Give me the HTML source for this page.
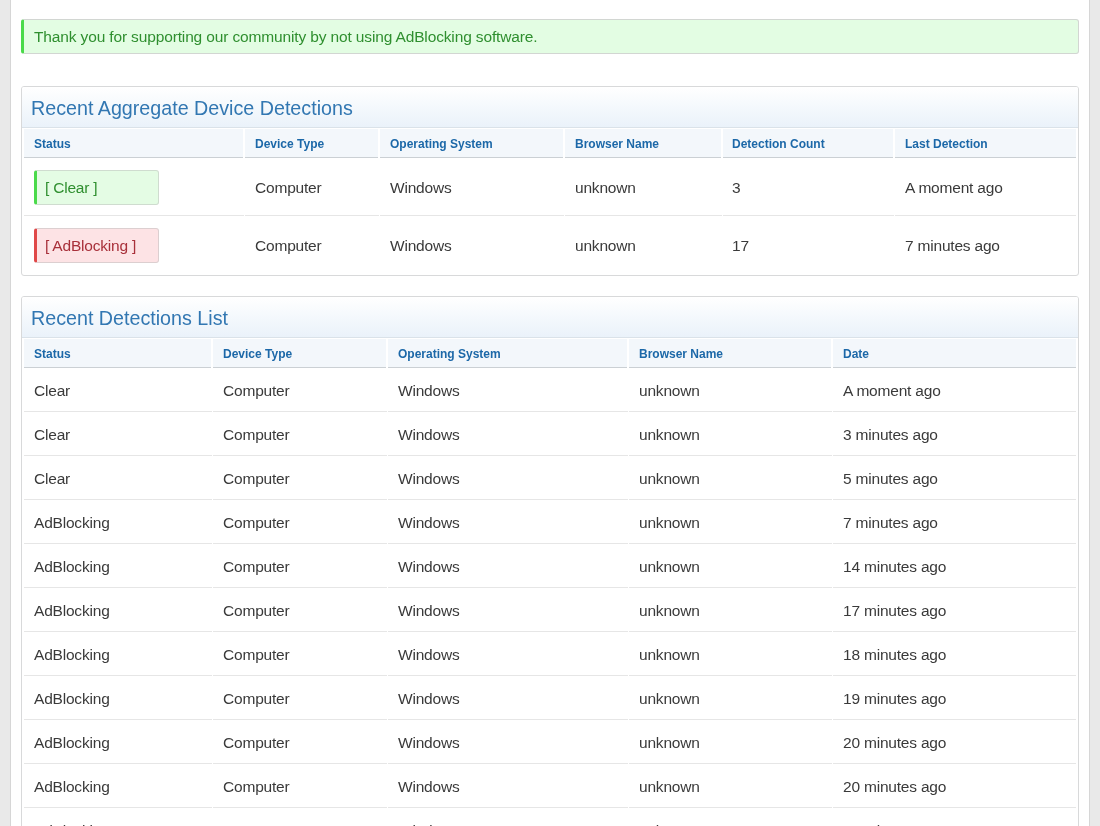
<!DOCTYPE html>
<html><head><meta charset="utf-8"><title>Detections</title>
<style>
html,body{margin:0;padding:0}
body{width:1100px;height:826px;overflow:hidden;background:#e9e9e9;position:relative;font-family:"Liberation Sans", sans-serif}
.wrap{position:absolute;left:10px;top:-10px;width:1078px;height:900px;background:#fff;border:1px solid #d6d6d6}
.t{position:absolute;white-space:nowrap;will-change:transform}
.alert{position:absolute;left:21px;top:19px;width:1058px;height:35px;box-sizing:border-box;background:#e3fde3;border:1px solid #d2d6d2;border-left:3px solid #4ada4a;border-radius:3px}
.panel{position:absolute;left:21px;width:1058px;box-sizing:border-box;border:1px solid #d8d9da;border-radius:3px;background:#fff;overflow:hidden}
.ph{position:absolute;left:0;top:0;right:0;height:40px;background:linear-gradient(#ffffff,#eaf2fa);border-bottom:1px solid #dae2e9}
.th{position:absolute;height:29px;box-sizing:border-box;background:#f3f7fb;border-top:1px solid #fff;border-bottom:1px solid #cbd0d4}
.sep{position:absolute;height:1px;background:#e6e6e6}
.ttl{color:#3277b2}
.hd{color:#1c68a8;font-weight:bold}
.td{color:#3a3a3a}
.badge{position:absolute;box-sizing:border-box;width:125px;height:35px;border-radius:3px}
.bc{background:#e4fce4;border:1px solid #cfdccf;border-left:3px solid #4ada4a}
.ba{background:#fde3e5;border:1px solid #dccfd0;border-left:3px solid #e04848}
.gt{color:#2f8f2f}
.rt{color:#a8303a}
</style></head><body>
<div class="wrap"></div>
<div class="alert"></div>
<div class="t gt" style="left:34px;top:28.68px;font-size:15.5px;line-height:15.5px;letter-spacing:-0.14px">Thank you for supporting our community by not using AdBlocking software.</div>
<div class="panel" style="top:86px;height:190px"><div class="ph"></div></div>
<div class="t ttl" style="left:31px;top:98.92px;font-size:19.7px;line-height:19.7px">Recent Aggregate Device Detections</div>
<div class="th" style="left:24px;top:128px;height:30px;width:219px"></div>
<div class="t hd" style="left:34px;top:137.54px;font-size:12px;line-height:12px">Status</div>
<div class="th" style="left:245px;top:128px;height:30px;width:133px"></div>
<div class="t hd" style="left:255px;top:137.54px;font-size:12px;line-height:12px">Device Type</div>
<div class="th" style="left:380px;top:128px;height:30px;width:183px"></div>
<div class="t hd" style="left:390px;top:137.54px;font-size:12px;line-height:12px">Operating System</div>
<div class="th" style="left:565px;top:128px;height:30px;width:156px"></div>
<div class="t hd" style="left:575px;top:137.54px;font-size:12px;line-height:12px">Browser Name</div>
<div class="th" style="left:723px;top:128px;height:30px;width:170px"></div>
<div class="t hd" style="left:732px;top:137.54px;font-size:12px;line-height:12px">Detection Count</div>
<div class="th" style="left:895px;top:128px;height:30px;width:181px"></div>
<div class="t hd" style="left:905px;top:137.54px;font-size:12px;line-height:12px">Last Detection</div>
<div class="sep" style="left:24px;top:215px;width:220px"></div>
<div class="sep" style="left:245px;top:215px;width:134px"></div>
<div class="sep" style="left:380px;top:215px;width:184px"></div>
<div class="sep" style="left:565px;top:215px;width:157px"></div>
<div class="sep" style="left:723px;top:215px;width:171px"></div>
<div class="sep" style="left:895px;top:215px;width:181px"></div>
<div class="badge bc" style="left:34px;top:170px"></div>
<div class="t gt" style="left:45px;top:179.88px;font-size:15.5px;line-height:15.5px;letter-spacing:-0.2px">[ Clear ]</div>
<div class="t td" style="left:255px;top:179.88px;font-size:15.5px;line-height:15.5px;letter-spacing:-0.2px">Computer</div>
<div class="t td" style="left:390px;top:179.88px;font-size:15.5px;line-height:15.5px;letter-spacing:-0.2px">Windows</div>
<div class="t td" style="left:575px;top:179.88px;font-size:15.5px;line-height:15.5px;letter-spacing:-0.2px">unknown</div>
<div class="t td" style="left:732px;top:179.88px;font-size:15.5px;line-height:15.5px;letter-spacing:-0.2px">3</div>
<div class="t td" style="left:905px;top:179.88px;font-size:15.5px;line-height:15.5px;letter-spacing:-0.2px">A moment ago</div>
<div class="badge ba" style="left:34px;top:228px"></div>
<div class="t rt" style="left:45px;top:237.88px;font-size:15.5px;line-height:15.5px;letter-spacing:-0.2px">[ AdBlocking ]</div>
<div class="t td" style="left:255px;top:237.88px;font-size:15.5px;line-height:15.5px;letter-spacing:-0.2px">Computer</div>
<div class="t td" style="left:390px;top:237.88px;font-size:15.5px;line-height:15.5px;letter-spacing:-0.2px">Windows</div>
<div class="t td" style="left:575px;top:237.88px;font-size:15.5px;line-height:15.5px;letter-spacing:-0.2px">unknown</div>
<div class="t td" style="left:732px;top:237.88px;font-size:15.5px;line-height:15.5px;letter-spacing:-0.2px">17</div>
<div class="t td" style="left:905px;top:237.88px;font-size:15.5px;line-height:15.5px;letter-spacing:-0.2px">7 minutes ago</div>
<div class="panel" style="top:296px;height:600px"><div class="ph"></div></div>
<div class="t ttl" style="left:31px;top:308.92px;font-size:19.7px;line-height:19.7px">Recent Detections List</div>
<div class="th" style="left:24px;top:338px;height:30px;width:187px"></div>
<div class="t hd" style="left:34px;top:347.54px;font-size:12px;line-height:12px">Status</div>
<div class="th" style="left:213px;top:338px;height:30px;width:173px"></div>
<div class="t hd" style="left:223px;top:347.54px;font-size:12px;line-height:12px">Device Type</div>
<div class="th" style="left:388px;top:338px;height:30px;width:239px"></div>
<div class="t hd" style="left:398px;top:347.54px;font-size:12px;line-height:12px">Operating System</div>
<div class="th" style="left:629px;top:338px;height:30px;width:202px"></div>
<div class="t hd" style="left:639px;top:347.54px;font-size:12px;line-height:12px">Browser Name</div>
<div class="th" style="left:833px;top:338px;height:30px;width:243px"></div>
<div class="t hd" style="left:843px;top:347.54px;font-size:12px;line-height:12px">Date</div>
<div class="sep" style="left:24px;top:411px;width:188px"></div>
<div class="sep" style="left:213px;top:411px;width:174px"></div>
<div class="sep" style="left:388px;top:411px;width:240px"></div>
<div class="sep" style="left:629px;top:411px;width:203px"></div>
<div class="sep" style="left:833px;top:411px;width:243px"></div>
<div class="t td" style="left:34px;top:382.88px;font-size:15.5px;line-height:15.5px;letter-spacing:-0.2px">Clear</div>
<div class="t td" style="left:223px;top:382.88px;font-size:15.5px;line-height:15.5px;letter-spacing:-0.2px">Computer</div>
<div class="t td" style="left:398px;top:382.88px;font-size:15.5px;line-height:15.5px;letter-spacing:-0.2px">Windows</div>
<div class="t td" style="left:639px;top:382.88px;font-size:15.5px;line-height:15.5px;letter-spacing:-0.2px">unknown</div>
<div class="t td" style="left:843px;top:382.88px;font-size:15.5px;line-height:15.5px;letter-spacing:-0.2px">A moment ago</div>
<div class="sep" style="left:24px;top:455px;width:188px"></div>
<div class="sep" style="left:213px;top:455px;width:174px"></div>
<div class="sep" style="left:388px;top:455px;width:240px"></div>
<div class="sep" style="left:629px;top:455px;width:203px"></div>
<div class="sep" style="left:833px;top:455px;width:243px"></div>
<div class="t td" style="left:34px;top:426.88px;font-size:15.5px;line-height:15.5px;letter-spacing:-0.2px">Clear</div>
<div class="t td" style="left:223px;top:426.88px;font-size:15.5px;line-height:15.5px;letter-spacing:-0.2px">Computer</div>
<div class="t td" style="left:398px;top:426.88px;font-size:15.5px;line-height:15.5px;letter-spacing:-0.2px">Windows</div>
<div class="t td" style="left:639px;top:426.88px;font-size:15.5px;line-height:15.5px;letter-spacing:-0.2px">unknown</div>
<div class="t td" style="left:843px;top:426.88px;font-size:15.5px;line-height:15.5px;letter-spacing:-0.2px">3 minutes ago</div>
<div class="sep" style="left:24px;top:499px;width:188px"></div>
<div class="sep" style="left:213px;top:499px;width:174px"></div>
<div class="sep" style="left:388px;top:499px;width:240px"></div>
<div class="sep" style="left:629px;top:499px;width:203px"></div>
<div class="sep" style="left:833px;top:499px;width:243px"></div>
<div class="t td" style="left:34px;top:470.88px;font-size:15.5px;line-height:15.5px;letter-spacing:-0.2px">Clear</div>
<div class="t td" style="left:223px;top:470.88px;font-size:15.5px;line-height:15.5px;letter-spacing:-0.2px">Computer</div>
<div class="t td" style="left:398px;top:470.88px;font-size:15.5px;line-height:15.5px;letter-spacing:-0.2px">Windows</div>
<div class="t td" style="left:639px;top:470.88px;font-size:15.5px;line-height:15.5px;letter-spacing:-0.2px">unknown</div>
<div class="t td" style="left:843px;top:470.88px;font-size:15.5px;line-height:15.5px;letter-spacing:-0.2px">5 minutes ago</div>
<div class="sep" style="left:24px;top:543px;width:188px"></div>
<div class="sep" style="left:213px;top:543px;width:174px"></div>
<div class="sep" style="left:388px;top:543px;width:240px"></div>
<div class="sep" style="left:629px;top:543px;width:203px"></div>
<div class="sep" style="left:833px;top:543px;width:243px"></div>
<div class="t td" style="left:34px;top:514.88px;font-size:15.5px;line-height:15.5px;letter-spacing:-0.2px">AdBlocking</div>
<div class="t td" style="left:223px;top:514.88px;font-size:15.5px;line-height:15.5px;letter-spacing:-0.2px">Computer</div>
<div class="t td" style="left:398px;top:514.88px;font-size:15.5px;line-height:15.5px;letter-spacing:-0.2px">Windows</div>
<div class="t td" style="left:639px;top:514.88px;font-size:15.5px;line-height:15.5px;letter-spacing:-0.2px">unknown</div>
<div class="t td" style="left:843px;top:514.88px;font-size:15.5px;line-height:15.5px;letter-spacing:-0.2px">7 minutes ago</div>
<div class="sep" style="left:24px;top:587px;width:188px"></div>
<div class="sep" style="left:213px;top:587px;width:174px"></div>
<div class="sep" style="left:388px;top:587px;width:240px"></div>
<div class="sep" style="left:629px;top:587px;width:203px"></div>
<div class="sep" style="left:833px;top:587px;width:243px"></div>
<div class="t td" style="left:34px;top:558.88px;font-size:15.5px;line-height:15.5px;letter-spacing:-0.2px">AdBlocking</div>
<div class="t td" style="left:223px;top:558.88px;font-size:15.5px;line-height:15.5px;letter-spacing:-0.2px">Computer</div>
<div class="t td" style="left:398px;top:558.88px;font-size:15.5px;line-height:15.5px;letter-spacing:-0.2px">Windows</div>
<div class="t td" style="left:639px;top:558.88px;font-size:15.5px;line-height:15.5px;letter-spacing:-0.2px">unknown</div>
<div class="t td" style="left:843px;top:558.88px;font-size:15.5px;line-height:15.5px;letter-spacing:-0.2px">14 minutes ago</div>
<div class="sep" style="left:24px;top:631px;width:188px"></div>
<div class="sep" style="left:213px;top:631px;width:174px"></div>
<div class="sep" style="left:388px;top:631px;width:240px"></div>
<div class="sep" style="left:629px;top:631px;width:203px"></div>
<div class="sep" style="left:833px;top:631px;width:243px"></div>
<div class="t td" style="left:34px;top:602.88px;font-size:15.5px;line-height:15.5px;letter-spacing:-0.2px">AdBlocking</div>
<div class="t td" style="left:223px;top:602.88px;font-size:15.5px;line-height:15.5px;letter-spacing:-0.2px">Computer</div>
<div class="t td" style="left:398px;top:602.88px;font-size:15.5px;line-height:15.5px;letter-spacing:-0.2px">Windows</div>
<div class="t td" style="left:639px;top:602.88px;font-size:15.5px;line-height:15.5px;letter-spacing:-0.2px">unknown</div>
<div class="t td" style="left:843px;top:602.88px;font-size:15.5px;line-height:15.5px;letter-spacing:-0.2px">17 minutes ago</div>
<div class="sep" style="left:24px;top:675px;width:188px"></div>
<div class="sep" style="left:213px;top:675px;width:174px"></div>
<div class="sep" style="left:388px;top:675px;width:240px"></div>
<div class="sep" style="left:629px;top:675px;width:203px"></div>
<div class="sep" style="left:833px;top:675px;width:243px"></div>
<div class="t td" style="left:34px;top:646.88px;font-size:15.5px;line-height:15.5px;letter-spacing:-0.2px">AdBlocking</div>
<div class="t td" style="left:223px;top:646.88px;font-size:15.5px;line-height:15.5px;letter-spacing:-0.2px">Computer</div>
<div class="t td" style="left:398px;top:646.88px;font-size:15.5px;line-height:15.5px;letter-spacing:-0.2px">Windows</div>
<div class="t td" style="left:639px;top:646.88px;font-size:15.5px;line-height:15.5px;letter-spacing:-0.2px">unknown</div>
<div class="t td" style="left:843px;top:646.88px;font-size:15.5px;line-height:15.5px;letter-spacing:-0.2px">18 minutes ago</div>
<div class="sep" style="left:24px;top:719px;width:188px"></div>
<div class="sep" style="left:213px;top:719px;width:174px"></div>
<div class="sep" style="left:388px;top:719px;width:240px"></div>
<div class="sep" style="left:629px;top:719px;width:203px"></div>
<div class="sep" style="left:833px;top:719px;width:243px"></div>
<div class="t td" style="left:34px;top:690.88px;font-size:15.5px;line-height:15.5px;letter-spacing:-0.2px">AdBlocking</div>
<div class="t td" style="left:223px;top:690.88px;font-size:15.5px;line-height:15.5px;letter-spacing:-0.2px">Computer</div>
<div class="t td" style="left:398px;top:690.88px;font-size:15.5px;line-height:15.5px;letter-spacing:-0.2px">Windows</div>
<div class="t td" style="left:639px;top:690.88px;font-size:15.5px;line-height:15.5px;letter-spacing:-0.2px">unknown</div>
<div class="t td" style="left:843px;top:690.88px;font-size:15.5px;line-height:15.5px;letter-spacing:-0.2px">19 minutes ago</div>
<div class="sep" style="left:24px;top:763px;width:188px"></div>
<div class="sep" style="left:213px;top:763px;width:174px"></div>
<div class="sep" style="left:388px;top:763px;width:240px"></div>
<div class="sep" style="left:629px;top:763px;width:203px"></div>
<div class="sep" style="left:833px;top:763px;width:243px"></div>
<div class="t td" style="left:34px;top:734.88px;font-size:15.5px;line-height:15.5px;letter-spacing:-0.2px">AdBlocking</div>
<div class="t td" style="left:223px;top:734.88px;font-size:15.5px;line-height:15.5px;letter-spacing:-0.2px">Computer</div>
<div class="t td" style="left:398px;top:734.88px;font-size:15.5px;line-height:15.5px;letter-spacing:-0.2px">Windows</div>
<div class="t td" style="left:639px;top:734.88px;font-size:15.5px;line-height:15.5px;letter-spacing:-0.2px">unknown</div>
<div class="t td" style="left:843px;top:734.88px;font-size:15.5px;line-height:15.5px;letter-spacing:-0.2px">20 minutes ago</div>
<div class="sep" style="left:24px;top:807px;width:188px"></div>
<div class="sep" style="left:213px;top:807px;width:174px"></div>
<div class="sep" style="left:388px;top:807px;width:240px"></div>
<div class="sep" style="left:629px;top:807px;width:203px"></div>
<div class="sep" style="left:833px;top:807px;width:243px"></div>
<div class="t td" style="left:34px;top:778.88px;font-size:15.5px;line-height:15.5px;letter-spacing:-0.2px">AdBlocking</div>
<div class="t td" style="left:223px;top:778.88px;font-size:15.5px;line-height:15.5px;letter-spacing:-0.2px">Computer</div>
<div class="t td" style="left:398px;top:778.88px;font-size:15.5px;line-height:15.5px;letter-spacing:-0.2px">Windows</div>
<div class="t td" style="left:639px;top:778.88px;font-size:15.5px;line-height:15.5px;letter-spacing:-0.2px">unknown</div>
<div class="t td" style="left:843px;top:778.88px;font-size:15.5px;line-height:15.5px;letter-spacing:-0.2px">20 minutes ago</div>
<div class="sep" style="left:24px;top:851px;width:188px"></div>
<div class="sep" style="left:213px;top:851px;width:174px"></div>
<div class="sep" style="left:388px;top:851px;width:240px"></div>
<div class="sep" style="left:629px;top:851px;width:203px"></div>
<div class="sep" style="left:833px;top:851px;width:243px"></div>
<div class="t td" style="left:34px;top:822.88px;font-size:15.5px;line-height:15.5px;letter-spacing:-0.2px">AdBlocking</div>
<div class="t td" style="left:223px;top:822.88px;font-size:15.5px;line-height:15.5px;letter-spacing:-0.2px">Computer</div>
<div class="t td" style="left:398px;top:822.88px;font-size:15.5px;line-height:15.5px;letter-spacing:-0.2px">Windows</div>
<div class="t td" style="left:639px;top:822.88px;font-size:15.5px;line-height:15.5px;letter-spacing:-0.2px">unknown</div>
<div class="t td" style="left:843px;top:822.88px;font-size:15.5px;line-height:15.5px;letter-spacing:-0.2px">20 minutes ago</div>
</body></html>
